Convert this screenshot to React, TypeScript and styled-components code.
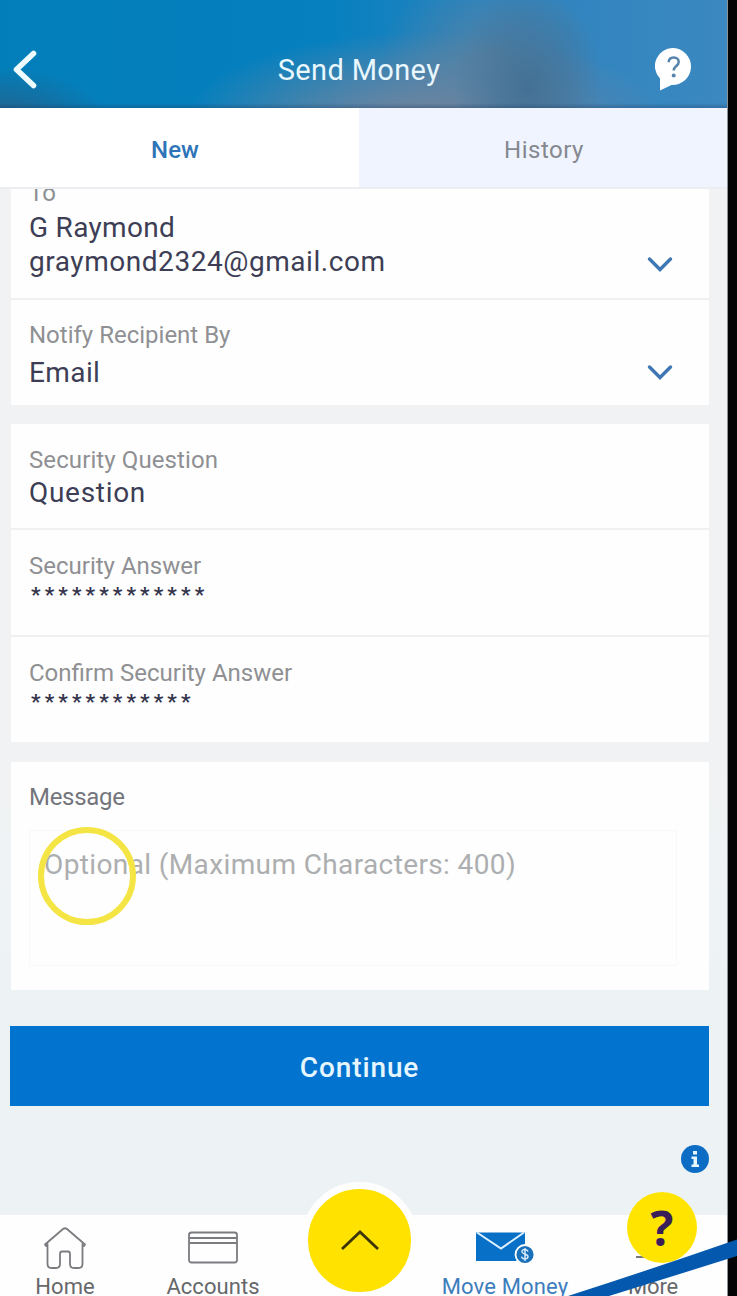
import React from 'react';
import styled, { createGlobalStyle } from 'styled-components';

const GlobalStyle = createGlobalStyle`
  * { box-sizing: border-box; }
  body { margin: 0; background: #020304; font-family: Roboto, "Liberation Sans", sans-serif; }
`;

const Stage = styled.div`
  position: relative;
  width: 737px;
  height: 1296px;
  overflow: hidden;
  background: #020304;
`;

const Screen = styled.main`
  display: flex;
  flex-direction: column;
  width: 728px;
  height: 1296px;
  background: linear-gradient(#f1f2f3 0, #f1f2f3 58%, #edf3f5 75%, #edf3f5 100%);
  border-right: 1px solid #8d9296;
`;

const Header = styled.header`
  display: flex;
  align-items: center;
  flex: none;
  height: 108px;
  padding: 32px 35px 0 13px;
  background:
    linear-gradient(to bottom, transparent 103px, rgba(30, 60, 100, 0.35) 108px),
    radial-gradient(ellipse 110px 55px at 0 122px, rgba(50, 85, 120, 0.75), transparent),
    radial-gradient(ellipse 75px 100px at 528px 88px, rgba(66, 112, 148, 0.95), rgba(66, 112, 148, 0.5) 50%, transparent),
    radial-gradient(ellipse 110px 85px at 490px 58px, rgba(100, 130, 155, 0.7), rgba(100, 130, 155, 0.35) 50%, transparent),
    radial-gradient(ellipse 240px 90px at 425px 122px, rgba(122, 133, 155, 1), rgba(115, 133, 158, 0.6) 50%, transparent),
    linear-gradient(90deg, #027fba 0, #0680bf 45%, #2b83bf 68%, #3c88c0 100%);
`;

const Title = styled.h1`
  flex: 1;
  margin: 0;
  padding-left: 26px;
  color: #e9f7ff;
  font-size: 29px;
  font-weight: 400;
  line-height: 36px;
  letter-spacing: 0.35px;
  text-align: center;
`;

const Tabs = styled.nav`
  display: flex;
  flex: none;
  height: 81px;
  border-bottom: 2px solid #ecedf1;
`;

const Tab = styled.a<{ $active?: boolean }>`
  display: flex;
  align-items: center;
  justify-content: center;
  width: ${p => (p.$active ? '359px' : '368px')};
  padding: 5px ${p => (p.$active ? '9px' : '0')} 0 ${p => (p.$active ? '0' : '2px')};
  background: ${p => (p.$active ? '#fff' : '#f0f4ff')};
  color: ${p => (p.$active ? '#2d74b8' : '#85898f')};
  font-size: 24px;
  font-weight: ${p => (p.$active ? 500 : 400)};
  letter-spacing: ${p => (p.$active ? '0.1px' : '0.5px')};
`;

const Form = styled.section`
  display: flex;
  flex-direction: column;
  flex: none;
  gap: 19px;
  height: 1026px;
  padding: 0 18px 0 11px;
  overflow: hidden;
`;

const Card = styled.div<{ $height: number }>`
  display: flex;
  flex-direction: column;
  flex: none;
  height: ${p => p.$height}px;
  background: #fefefe;
`;

const Row = styled.div<{ $height: number; $top: number; $gap: number }>`
  display: flex;
  align-items: flex-end;
  justify-content: space-between;
  flex: none;
  height: ${p => p.$height}px;
  padding: 0 36px 0 18px;

  & + & { border-top: 2px solid #f0f0f1; }
  & > div {
    display: flex;
    flex-direction: column;
    align-self: flex-start;
    gap: ${p => p.$gap}px;
    margin-top: ${p => p.$top}px;
  }
`;

const Label = styled.span<{ $spacing?: number; $dark?: boolean }>`
  color: ${p => (p.$dark ? '#74757c' : '#8f9093')};
  font-size: 24px;
  line-height: 28px;
  letter-spacing: ${p => p.$spacing ?? 0}px;
  white-space: nowrap;
`;

const Value = styled.span<{ $spacing?: number }>`
  color: #3d3e55;
  font-size: 28px;
  line-height: 34px;
  letter-spacing: ${p => p.$spacing ?? 0.55}px;
  white-space: nowrap;
`;

const Masked = styled.span`
  padding-left: 2px;
  color: #34354c;
  font-size: 21px;
  font-weight: 700;
  line-height: 24px;
  letter-spacing: 4.1px;
`;

const MessageCard = styled(Card)`
  margin-top: 1px;
`;

const MessageBlock = styled.div`
  display: flex;
  flex-direction: column;
  gap: 19px;
  padding: 21px 32px 0 18px;
`;

const MessageBox = styled.div`
  height: 136px;
  padding: 17px 14px;
  border: 1px solid #f8f8f8;
  color: #adaeb0;
  font-size: 28px;
  line-height: 34px;
  letter-spacing: 0.38px;
  white-space: nowrap;
`;

const Continue = styled.button`
  flex: none;
  height: 80px;
  margin: 17px 0 0 -1px;
  padding: 2px 0 0;
  border: 0;
  background: #0273cf;
  color: #e6f6ff;
  font-family: inherit;
  font-size: 28px;
  font-weight: 500;
  letter-spacing: 0.9px;
`;

const InfoRow = styled.div`
  display: flex;
  justify-content: flex-end;
  padding-top: 20px;
`;

const BottomNav = styled.nav`
  display: flex;
  flex: none;
  height: 81px;
  background: #fefefe;
`;

const NavItem = styled.a<{ $width: number; $active?: boolean; $spacing?: number }>`
  display: flex;
  flex-direction: column;
  align-items: center;
  flex: none;
  width: ${p => p.$width}px;
  padding-top: 10px;
  color: ${p => (p.$active ? '#3c7dbd' : '#66686b')};
  font-size: 22px;
  line-height: 24px;
  letter-spacing: ${p => p.$spacing ?? 0}px;
  white-space: nowrap;
  svg { display: block; flex: none; margin-bottom: 2px; }
`;

const UpButton = styled.div`
  position: absolute;
  left: 301px;
  top: 1182px;
  display: flex;
  align-items: center;
  justify-content: center;
  width: 117px;
  height: 117px;
  border: 7px solid #fefefe;
  border-radius: 50%;
  background: #ffe200;
`;

const HelpBubble = styled.div`
  position: absolute;
  left: 627px;
  top: 1192px;
  width: 70px;
  height: 71px;
  border-radius: 50%;
  background: #ffe400;
  color: #3a1e57;
  font: 700 48px/71px "Open Sans", sans-serif;
  text-align: center;
`;

const TapRing = styled.div`
  position: absolute;
  left: 38px;
  top: 827px;
  width: 98px;
  height: 98px;
  border: 6px solid #f4e544;
  border-radius: 50%;
`;

const Swoosh = styled.svg`
  position: absolute;
  right: 0;
  bottom: 0;
`;

const ChevronIcon = styled.svg<{ $lift: number }>`
  margin-bottom: ${p => p.$lift}px;
`;

const Chevron = ({ lift }: { lift: number }) => (
  <ChevronIcon $lift={lift} width="26" height="17" viewBox="0 0 26 17" fill="none">
    <path d="M2.500 3 13 13.500 23.500 3" stroke="#3f76b4" strokeWidth="3.400" strokeLinecap="round" />
  </ChevronIcon>
);

export default function App() {
  return (
    <Stage>
      <GlobalStyle />
      <Screen>
        <Header>
          <svg width="24" height="40" viewBox="0 0 24 40" fill="none">
            <path d="M20.500 3.500 3.500 19.500 20.500 35.500" stroke="#effcff" strokeWidth="5.600" strokeLinecap="round" strokeLinejoin="round" />
          </svg>
          <Title>Send Money</Title>
          <svg width="37" height="44" viewBox="0 0 37 44">
            <path d="M18.500 0a18 18 0 1 1-2 37L5 42.500V30.500A18 18 0 0 1 18.500 0Z" fill="#fff" />
            <path d="M13.700 14.200c0-3 2.100-4.800 5-4.800s5 1.800 5 4.500c0 4.200-5 4-5 8.600" fill="none" stroke="#5585ac" strokeWidth="2.500" />
            <circle cx="18.700" cy="27.500" r="2" fill="#5585ac" />
          </svg>
        </Header>
        <Tabs>
          <Tab $active>New</Tab>
          <Tab>History</Tab>
        </Tabs>
        <Form>
          <Card $height={216}>
            <Row $height={109} $top={-10} $gap={4}>
              <div>
                <Label>To</Label>
                <Value><Value $spacing={0.3}>G Raymond</Value><br />graymond2324@gmail.com</Value>
              </div>
              <Chevron lift={25} />
            </Row>
            <Row $height={107} $top={21} $gap={7}>
              <div>
                <Label>Notify Recipient By</Label>
                <Value $spacing={0.4}>Email</Value>
              </div>
              <Chevron lift={24} />
            </Row>
          </Card>
          <Card $height={318}>
            <Row $height={104} $top={22} $gap={2}>
              <div>
                <Label $spacing={0.1}>Security Question</Label>
                <Value $spacing={0.7}>Question</Value>
              </div>
            </Row>
            <Row $height={107} $top={22} $gap={3}>
              <div>
                <Label>Security Answer</Label>
                <Masked>*************</Masked>
              </div>
            </Row>
            <Row $height={107} $top={22} $gap={3}>
              <div>
                <Label>Confirm Security Answer</Label>
                <Masked>************</Masked>
              </div>
            </Row>
          </Card>
          <MessageCard $height={228}>
            <MessageBlock>
              <Label $dark $spacing={-0.3}>Message</Label>
              <MessageBox>Optional (Maximum Characters: 400)</MessageBox>
            </MessageBlock>
          </MessageCard>
          <Continue>Continue</Continue>
          <InfoRow>
            <svg width="28" height="28" viewBox="0 0 28 28">
              <circle cx="14" cy="14" r="14" fill="#0d6dc4" />
              <path d="M12 6h4v3.500h-4zM10.500 11.500H16v8h2V22h-7.500v-2.500h2v-5.500h-2z" fill="#e6f6ff" />
            </svg>
          </InfoRow>
        </Form>
        <BottomNav>
          <NavItem $width={130} $spacing={0.1}>
            <svg width="44" height="48" viewBox="0 0 44 48" fill="none" stroke="#7a7c80" strokeWidth="1.800" strokeLinejoin="round" strokeLinecap="round">
              <path d="M3 21 2 19.500 20 4q2-1.500 4 0L42 19.500 41 21M4.500 19V39q0 4 4 4H13q4 0 4-4V29q0-2.500 2-2.500h6q2 0 2 2.500v10q0 4 4 4h4.500q4 0 4-4V19" />
            </svg>
            Home
          </NavItem>
          <NavItem $width={166} $spacing={0.05}>
            <svg width="50" height="48" viewBox="0 0 50 48" fill="none" stroke="#7a7c80" strokeWidth="1.800">
              <rect x="1" y="7.500" width="48" height="30" rx="2.500" />
              <path d="M1 13h48M1 18h48" />
            </svg>
            Accounts
          </NavItem>
          <NavItem $width={126} />
          <NavItem $width={166} $active $spacing={0.15}>
            <svg width="61" height="48" viewBox="-1 0 61 48">
              <path d="M0 7.500h49v18L40 36H0z" fill="#0871c7" />
              <path d="m1 7.500 24 16L48 7.500" fill="none" stroke="#dff1ff" strokeWidth="2" />
              <circle cx="49" cy="29.500" r="9.500" fill="#1b70ba" stroke="#fff" strokeWidth="1.800" />
              <path d="M52 26.500c-1-3-6.500-2.500-6 .500.500 2.800 6 1.600 6 4.600s-5.500 3.200-6.500 0M49 23v13" fill="none" stroke="#d5eafa" strokeWidth="1.500" />
            </svg>
            Move Money
          </NavItem>
          <NavItem $width={130} $spacing={-0.2}>
            <svg width="34" height="48" viewBox="0 0 34 48">
              <path d="M0 32h34" stroke="#77797c" strokeWidth="1.800" />
            </svg>
            More
          </NavItem>
        </BottomNav>
      </Screen>
      <TapRing />
      <UpButton>
        <svg width="40" height="24" viewBox="0 0 40 24" fill="none">
          <path d="M2 20 20 3 38 20" stroke="#3d3509" strokeWidth="2.800" />
        </svg>
      </UpButton>
      <HelpBubble>?</HelpBubble>
      <Swoosh width="177" height="60" viewBox="560 1236 177 60">
        <path d="M568 1296Q655 1268 737 1239.500V1256Q680 1274 609 1296Z" fill="#0459ae" />
      </Swoosh>
    </Stage>
  );
}
